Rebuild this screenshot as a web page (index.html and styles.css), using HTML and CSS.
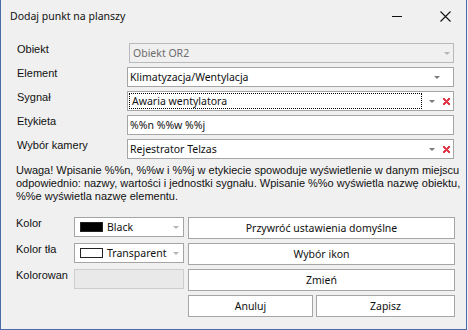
FILE: index.html
```
<!DOCTYPE html>
<html lang="pl">
<head>
    <meta charset="UTF-8">
    <title>Dodaj punkt na planszy</title>
    <link rel="stylesheet" href="styles.css">
</head>
<body>
    <div class="window">
        <div class="titlebar">
            <span class="title">Dodaj punkt na planszy</span>
            <div class="caption">
                <span class="cap-btn">
                    <svg width="10" height="10" viewBox="0 0 10 10"><path d="M0 5.5H10" stroke="#111" stroke-width="1"/></svg>
                </span>
                <span class="cap-btn">
                    <svg width="11" height="11" viewBox="0 0 11 11"><path d="M0.5 0.5L10.5 10.5M10.5 0.5L0.5 10.5" stroke="#111" stroke-width="1.1"/></svg>
                </span>
            </div>
        </div>

        <div class="content">
            <div class="fields">
                <label class="lbl">Obiekt</label>
                <div class="combo disabled shifted">
                    <span class="value">Obiekt OR2</span>
                    <span class="arrow light"></span>
                </div>

                <label class="lbl">Element</label>
                <div class="combo">
                    <span class="value">Klimatyzacja/Wentylacja</span>
                    <span class="arrow"></span>
                    <span class="slot"></span>
                </div>

                <label class="lbl">Sygnał</label>
                <div class="combo">
                    <span class="value focused">Awaria wentylatora</span>
                    <span class="arrow"></span>
                    <span class="clear"></span>
                </div>

                <label class="lbl">Etykieta</label>
                <div class="combo">
                    <span class="value">%%n %%w %%j</span>
                </div>

                <label class="lbl">Wybór kamery</label>
                <div class="combo">
                    <span class="value">Rejestrator Telzas</span>
                    <span class="arrow"></span>
                    <span class="clear"></span>
                </div>
            </div>

            <p class="note">Uwaga! Wpisanie %%n, %%w i %%j w etykiecie spowoduje wyświetlenie w danym miejscu<br>odpowiednio: nazwy, wartości i jednostki sygnału. Wpisanie %%o wyświetla nazwę obiektu,<br>%%e wyświetla nazwę elementu.</p>

            <div class="bottom">
                <label class="lbl">Kolor</label>
                <div class="color-combo">
                    <span class="swatch black"></span>
                    <span class="value">Black</span>
                    <span class="arrow light"></span>
                </div>
                <button class="btn">Przywróć ustawienia domyślne</button>

                <label class="lbl">Kolor tła</label>
                <div class="color-combo">
                    <span class="swatch"></span>
                    <span class="value">Transparent</span>
                    <span class="arrow light"></span>
                </div>
                <button class="btn">Wybór ikon</button>

                <label class="lbl">Kolorowan</label>
                <div class="color-combo disabled"></div>
                <button class="btn">Zmień</button>

                <span></span>
                <span></span>
                <div class="actions">
                    <button class="btn">Anuluj</button>
                    <button class="btn">Zapisz</button>
                </div>
            </div>
        </div>
    </div>
</body>
</html>
```

FILE: styles.css
```
body {
    margin: 0;
    background: #f0f0f0;
}
.window {
    width: 465px;
    height: 329px;
    background: #f0f0f0;
    border: 1px solid #4a6aa8;
    border-top: none;
    font-family: 'Liberation Sans', Arial, sans-serif;
    font-size: 11px;
    color: #000;
}
.titlebar {
    height: 32px;
    display: flex;
    align-items: center;
    justify-content: space-between;
    padding: 0 6px 0 9px;
}
.title {
    font-family: 'Noto Sans', sans-serif;
    font-size: 10.5px;
    color: #111;
    padding-bottom: 1px;
}
.caption {
    display: flex;
    gap: 18px;
}
.cap-btn {
    width: 30px;
    height: 30px;
    display: flex;
    align-items: center;
    justify-content: center;
}
.content {
    padding: 11px 11px 0 15px;
}
.fields {
    display: grid;
    grid-template-columns: 111px 327px;
    row-gap: 4px;
}
.lbl {
    line-height: 13px;
    padding-left: 1px;
    color: #111;
    white-space: nowrap;
}
.combo, .color-combo {
    height: 18px;
    border: 1px solid #a5a5a5;
    background: #fff;
    display: flex;
    align-items: center;
    font-family: 'Noto Sans', sans-serif;
    font-size: 10.5px;
    color: #111;
}
.combo.disabled {
    background: #f0f0f0;
    border-color: #b9b9b9;
    color: #6d6d6d;
}
.combo.shifted {
    margin-left: 2px;
}
.value {
    flex: 1;
    padding-left: 5px;
    white-space: nowrap;
}
.combo .value {
    padding-left: 2px;
}
.combo.disabled .value {
    padding-left: 3px;
}
.combo.disabled .arrow {
    margin-right: 3px;
}
.value.focused {
    margin: 0 7px 0 1px;
    height: 14px;
    line-height: 14px;
    border: 1px dotted #000;
    padding-left: 2px;
}
.arrow {
    width: 0;
    height: 0;
    border-left: 3px solid transparent;
    border-right: 3px solid transparent;
    border-top: 3px solid #7a7a7a;
    margin-right: 4px;
}
.arrow.light {
    border-top-color: #b5b5b5;
}
.slot {
    width: 9px;
}
.clear {
    width: 7px;
    height: 7px;
    margin: 0 3px 0 4px;
    background:
        linear-gradient(45deg, transparent 40%, #e23a4b 40%, #e23a4b 60%, transparent 60%),
        linear-gradient(-45deg, transparent 40%, #e23a4b 40%, #e23a4b 60%, transparent 60%);
}
.note {
    margin: 5px 0 0;
    line-height: 13px;
    white-space: nowrap;
    color: #111;
}
.bottom {
    margin-top: 14px;
    display: grid;
    grid-template-columns: 54px 110px 267px;
    column-gap: 4px;
    row-gap: 4px;
    align-items: start;
}
.bottom .lbl {
    padding-left: 0;
}
.color-combo .value {
    padding-left: 4px;
}
.swatch {
    width: 21px;
    height: 8px;
    border: 1px solid #222;
    background: #fff;
    margin-left: 5px;
}
.swatch.black {
    background: #000;
}
.color-combo.disabled {
    background: #e9e9e9;
    border-color: #cdcdcd;
}
.btn {
    height: 22px;
    border: 1px solid #a5a5a5;
    background: #fff;
    font-family: 'Noto Sans', sans-serif;
    font-size: 10.5px;
    color: #111;
    padding: 0;
}
.actions {
    display: grid;
    grid-template-columns: 125px 139px;
    column-gap: 3px;
}
```
